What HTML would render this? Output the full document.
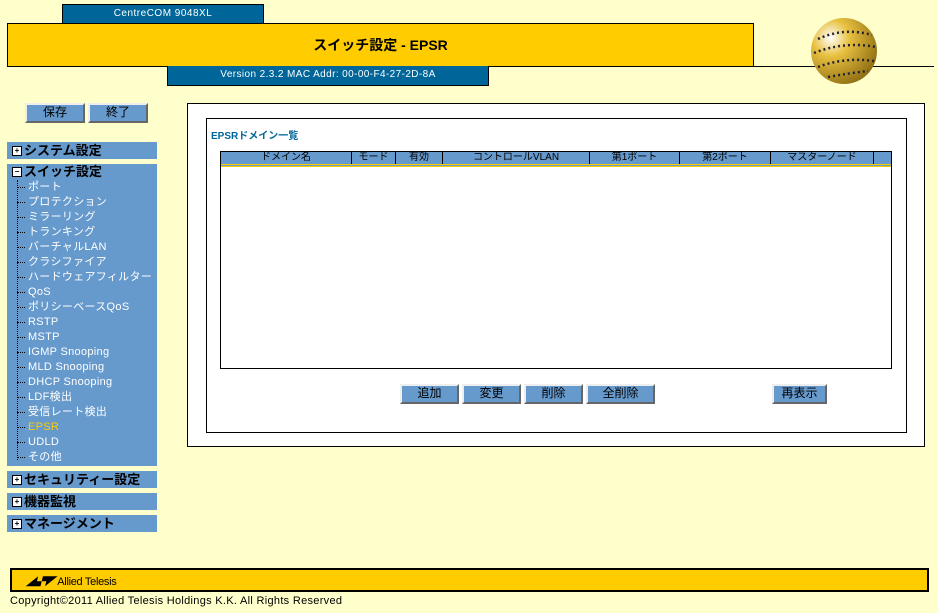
<!DOCTYPE html>
<html><head><meta charset="utf-8"><style>
body{margin:0;width:938px;height:613px;background:#FFFFCC;position:relative;overflow:hidden;font-family:"Liberation Sans","Noto Sans CJK JP",sans-serif;}
.a{position:absolute;box-sizing:border-box;}
.tab{background:#006699;color:#fff;font-size:10px;text-align:center;}
.btn{background:#6699CC;border:2px solid;border-color:#eee #666 #666 #eee;font-size:12px;text-align:center;line-height:15px;color:#000;}
.sec{background:#6699CC;left:7px;width:150px;font-size:13px;font-weight:bold;color:#000;}
.box{display:inline-block;width:8px;height:8px;border:1px solid #000;background:#fff;font-size:8px;line-height:8px;text-align:center;vertical-align:middle;margin:0 2px 2px 5px;font-weight:bold}
.it{position:absolute;left:10px;font-size:11px;font-weight:normal;color:#fff;height:15px;line-height:15px;white-space:nowrap;letter-spacing:0.3px}
.it:before{content:"";display:inline-block;width:8px;border-top:1px dotted #000;vertical-align:middle;margin-right:3px}
th{background:#6699CC;font-weight:normal;font-size:10px;border-right:1px solid #000;padding:0;height:12px;line-height:12px;color:#000}
</style></head><body>
<div class="a tab" style="left:62px;top:4px;width:202px;height:20px;border:1px solid #000;border-bottom:none;line-height:18px;letter-spacing:0.5px">CentreCOM 9048XL</div>
<div class="a" style="left:7px;top:23px;width:747px;height:44px;background:#FFCC00;border:1px solid #000;text-align:center;font-size:14px;font-weight:bold;line-height:42px">スイッチ設定 - EPSR</div>
<div class="a" style="left:753px;top:66px;width:181px;height:1px;background:#000"></div>
<div class="a tab" style="left:167px;top:66px;width:322px;height:20px;border:1px solid #000;border-top:none;line-height:18px;font-size:10px;letter-spacing:0.4px">Version 2.3.2 MAC Addr: 00-00-F4-27-2D-8A</div>
<svg class="a" style="left:810px;top:17px" width="68" height="68" viewBox="0 0 68 68"><defs><radialGradient id="g" cx="0.3" cy="0.3" r="0.8"><stop offset="0" stop-color="#fff"/><stop offset="0.35" stop-color="#e8c040"/><stop offset="1" stop-color="#8a6a10"/></radialGradient></defs><circle cx="34" cy="34" r="33" fill="url(#g)"/><g stroke="#223" stroke-width="2.5" stroke-dasharray="2 3" fill="none"><path d="M8 22Q34 10 62 18"/><path d="M4 36Q34 24 66 30"/><path d="M8 50Q34 40 64 44"/><path d="M18 60Q40 56 58 54"/></g></svg>
<div class="a btn" style="left:25px;top:103px;width:60px;height:20px">保存</div>
<div class="a btn" style="left:88px;top:103px;width:60px;height:20px">終了</div>
<div class="a sec" style="top:142px;height:17px;line-height:17px"><span class="box">+</span>システム設定</div>
<div class="a sec" style="top:164px;height:302px;line-height:16px;padding-top:0"><span class="box">−</span>スイッチ設定
<div class="a" style="left:10px;top:16px;height:280px;border-left:1px dotted #000"></div>
<div class="it" style="top:16px">ポート</div><div class="it" style="top:31px">プロテクション</div><div class="it" style="top:46px">ミラーリング</div><div class="it" style="top:61px">トランキング</div><div class="it" style="top:76px">バーチャルLAN</div><div class="it" style="top:91px">クラシファイア</div><div class="it" style="top:106px">ハードウェアフィルター</div><div class="it" style="top:121px">QoS</div><div class="it" style="top:136px">ポリシーベースQoS</div><div class="it" style="top:151px">RSTP</div><div class="it" style="top:166px">MSTP</div><div class="it" style="top:181px">IGMP Snooping</div><div class="it" style="top:196px">MLD Snooping</div><div class="it" style="top:211px">DHCP Snooping</div><div class="it" style="top:226px">LDF検出</div><div class="it" style="top:241px">受信レート検出</div><div class="it" style="top:256px;color:#FFCC00">EPSR</div><div class="it" style="top:271px">UDLD</div><div class="it" style="top:286px">その他</div>
</div>
<div class="a sec" style="top:471px;height:17px;line-height:17px"><span class="box">+</span>セキュリティー設定</div>
<div class="a sec" style="top:493px;height:17px;line-height:17px"><span class="box">+</span>機器監視</div>
<div class="a sec" style="top:515px;height:17px;line-height:17px"><span class="box">+</span>マネージメント</div>
<div class="a" style="left:187px;top:103px;width:738px;height:344px;background:#fff;border:1px solid #000"></div>
<div class="a" style="left:206px;top:118px;width:701px;height:315px;border:1px solid #000"></div>
<div class="a" style="left:211px;top:127px;font-size:10px;font-weight:bold;color:#006699">EPSRドメイン一覧</div>
<div class="a" style="left:220px;top:151px;width:672px;height:218px;border:1px solid #000">
<table style="border-collapse:collapse;width:670px;border-bottom:3px double #FFCC00"><tr>
<th style="width:130px">ドメイン名</th><th style="width:43px">モード</th><th style="width:46px">有効</th><th style="width:146px">コントロールVLAN</th><th style="width:89px">第1ポート</th><th style="width:90px">第2ポート</th><th style="width:102px">マスターノード</th><th style="border:none"></th></tr></table></div>
<div class="a btn" style="left:400px;top:384px;width:59px;height:20px">追加</div>
<div class="a btn" style="left:462px;top:384px;width:59px;height:20px">変更</div>
<div class="a btn" style="left:524px;top:384px;width:59px;height:20px">削除</div>
<div class="a btn" style="left:586px;top:384px;width:69px;height:20px">全削除</div>
<div class="a btn" style="left:772px;top:384px;width:55px;height:20px">再表示</div>
<div class="a" style="left:10px;top:568px;width:919px;height:24px;background:#FFCC00;border:2px solid #000"></div>
<div class="a" style="left:26px;top:573px;font-size:11px;letter-spacing:-0.3px"><span style="font-style:italic;font-weight:bold;font-size:10px">◢▞◤</span> Allied Telesis</div>
<div class="a" style="left:10px;top:595px;font-size:11px;letter-spacing:0.3px">Copyright©2011 Allied Telesis Holdings K.K. All Rights Reserved</div>
</body></html>
